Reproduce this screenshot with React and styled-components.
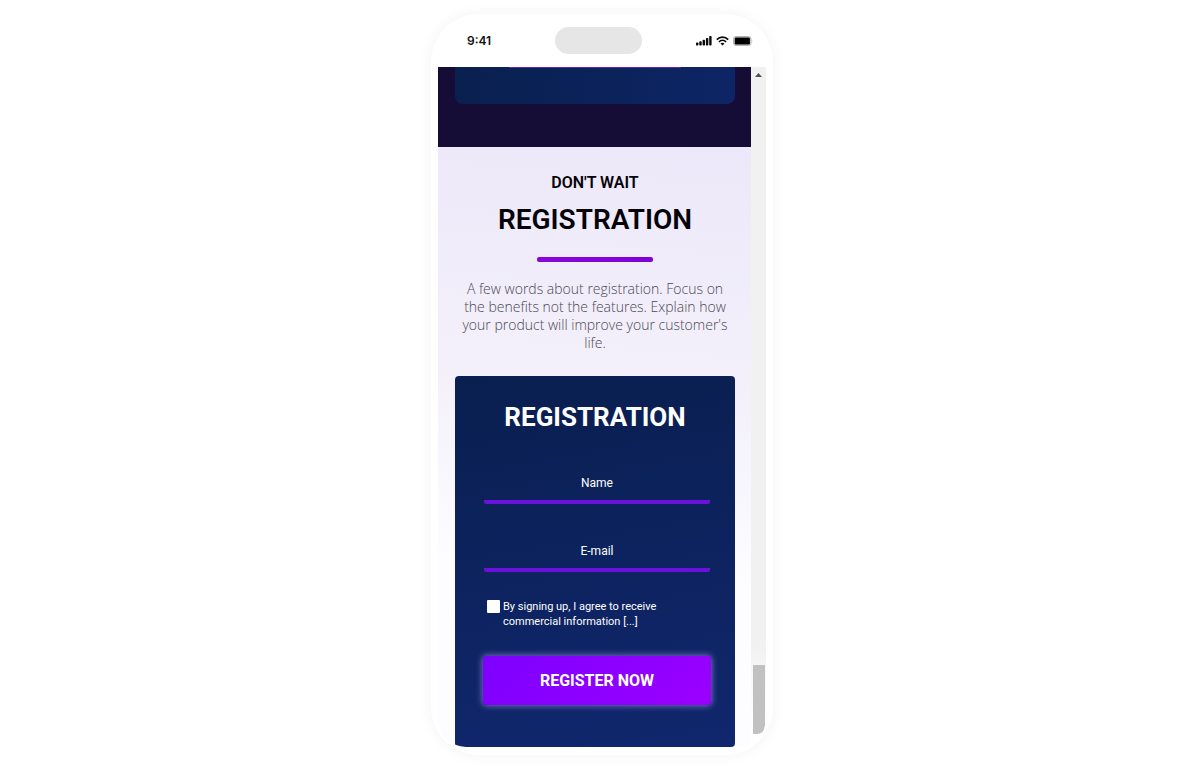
import React, { useState } from 'react';
import styled, { createGlobalStyle } from 'styled-components';

const GlobalStyle = createGlobalStyle`
  * {
    box-sizing: border-box;
  }
  body {
    margin: 0;
    background: #fff;
    font-family: Roboto, 'Liberation Sans', sans-serif;
    color: #050308;
  }
`;

const Page = styled.main`
  display: flex;
  justify-content: center;
  padding: 14px 0 12px 4px;
`;

const Phone = styled.div`
  width: 100%;
  max-width: 342px;
  padding: 0 7px 8px;
  border-radius: 48px;
  background: #fff;
  box-shadow: 0 0 14px 2px rgba(0, 0, 0, 0.04);
`;

const StatusBar = styled.header`
  display: grid;
  grid-template-columns: 88px auto 1fr;
  align-items: center;
  height: 53px;
  padding: 0 13px 0 29px;
`;

const Time = styled.span`
  font: 600 12px/16px Inter, sans-serif;
  color: #111;
`;

const Island = styled.div`
  width: 87px;
  height: 27px;
  border-radius: 14px;
  background: #e6e6e6;
`;

const StatusIcons = styled.div`
  display: flex;
  justify-content: flex-end;
  align-items: center;
  gap: 4px;
`;

const Screen = styled.div`
  display: flex;
  overflow: hidden;
  border-radius: 0 0 28px 28px;
`;

const Content = styled.div`
  flex: 1;
  min-width: 0;
`;

const PreviousSection = styled.section`
  height: 80px;
  padding: 0 16px 0 17px;
  background: #160d37;
`;

const PreviousCard = styled.div`
  display: flex;
  justify-content: center;
  height: 37px;
  border-radius: 0 0 8px 8px;
  background: linear-gradient(100deg, #09204f, #0d2565);
`;

const PreviousButtonEdge = styled.div`
  width: 172px;
  height: 1px;
  background: #6f1fae;
`;

const RegistrationSection = styled.section`
  padding: 26px 16px 0 17px;
  background: linear-gradient(185deg, #ece8f9 0%, #f4f1fb 42%, #fdfdff 70%);
  text-align: center;
`;

const Eyebrow = styled.p`
  margin: 0;
  font-size: 16px;
  line-height: 20px;
  font-weight: 600;
`;

const Title = styled.h2`
  margin: 0;
  font-size: ${props => (props.$light ? '26px' : '28px')};
  line-height: 32px;
  font-weight: ${props => (props.$light ? 700 : 600)};
  color: ${props => (props.$light ? '#fff' : 'inherit')};
`;

const Heading = styled.div`
  display: flex;
  flex-direction: column;
  align-items: center;
  gap: 11px;
`;

const Divider = styled.div`
  width: 116px;
  height: 5px;
  margin-top: 10px;
  border-radius: 2px;
  background: linear-gradient(90deg, #8a05dc, #7d00d8);
`;

const Description = styled.p`
  margin: 18px 0 24px;
  padding: 0 6px;
  font: 300 14px/18px 'Open Sans', sans-serif;
  color: #4b4853;
`;

const Card = styled.form`
  padding: 25px 24px 42px;
  border-radius: 4px;
  background: linear-gradient(170deg, #091f4f, #0d235f 50%, #10276e);
  color: #fff;
`;

const CardBody = styled.div`
  margin-top: 27px;
  padding-left: 4px;
`;

const Fields = styled.div`
  display: grid;
  gap: 24px;
  padding: 0 1px;
`;

const Field = styled.input`
  display: block;
  width: 100%;
  height: 44px;
  margin: 0;
  padding: 5px 0 0;
  border: 0;
  border-bottom: 4px solid #6c10dc;
  border-radius: 2px;
  background: transparent;
  color: #fff;
  font: 400 12px/16px Roboto, sans-serif;
  text-align: center;
  outline: none;

  &::placeholder {
    color: #fff;
    opacity: 1;
  }
`;

const Consent = styled.label`
  display: flex;
  align-items: flex-start;
  gap: 3px;
  margin: 27px 0;
  padding: 0 24px 0 4px;
  font-size: 11px;
  line-height: 15px;
  text-align: left;
`;

const Checkbox = styled.input`
  flex: none;
  appearance: none;
  width: 13px;
  height: 13px;
  margin: 1px 0 0;
  border-radius: 1px;
  background: #fff;

  &:checked {
    background: #8a00ff;
    border: 2px solid #fff;
  }
`;

const SubmitButton = styled.button`
  display: block;
  width: 100%;
  height: 49px;
  padding: 0;
  border: 0;
  border-radius: 4px;
  background: linear-gradient(135deg, #7d00ff, #9b00ff);
  box-shadow: 0 0 6px 1px rgba(150, 130, 220, 0.75);
  color: #fff;
  font: 700 16px/20px Roboto, sans-serif;
  cursor: pointer;
`;

const Scrollbar = styled.div`
  display: flex;
  flex-direction: column;
  align-items: center;
  justify-content: space-between;
  width: 15px;
  padding: 6px 0 13px;
  background: linear-gradient(#f1f1f1 85%, #f5f5f5 88%, #fff 98%);
`;

const Thumb = styled.div`
  width: 12px;
  height: 69px;
  background: #c1c1c1;
  border-radius: 0 0 8px 0;
`;

const SignalIcon = () => (
  <svg width="16" height="10" viewBox="0 0 16 10" fill="#080808">
    <rect x="0" y="6.5" width="2.4" height="3" rx="0.8" />
    <rect x="3.3" y="5.2" width="2.4" height="4.3" rx="0.8" />
    <rect x="6.6" y="3.8" width="2.4" height="5.7" rx="0.8" />
    <rect x="9.9" y="2" width="2.4" height="7.5" rx="0.8" />
    <rect x="13.2" y="0" width="2.4" height="9.5" rx="0.8" />
  </svg>
);

const WifiIcon = () => (
  <svg width="13" height="10" viewBox="0 0 13 10" fill="none" stroke="#080808">
    <path d="M0.8 3.6 C4 0.2 9 0.2 12.2 3.6" strokeWidth="1.7" />
    <path d="M2.9 6 C5 3.9 8 3.9 10.1 6" strokeWidth="1.7" />
    <path d="M4.5 7.4 Q6.5 5.9 8.5 7.4 L6.5 9.5Z" fill="#080808" stroke="none" />
  </svg>
);

const BatteryIcon = () => (
  <svg width="20" height="10" viewBox="0 0 20 10">
    <rect x="0.5" y="0.5" width="17.5" height="9" rx="2.5" fill="#ddd" stroke="#b5b5b5" />
    <rect x="1.7" y="1.6" width="15.2" height="6.8" rx="1.2" fill="#000" />
    <path d="M18.8 3.5 Q20 5 18.8 6.5Z" fill="#b5b5b5" />
  </svg>
);

const ArrowUp = () => (
  <svg width="7" height="4" viewBox="0 0 7 4">
    <path d="M3.5 0 L7 4 H0Z" fill="#505050" />
  </svg>
);

const RegistrationForm = () => {
  const [values, setValues] = useState({ name: '', email: '' });
  const [agreed, setAgreed] = useState(false);
  const handleChange = e =>
    setValues({ ...values, [e.target.name]: e.target.value });

  return (
    <Card onSubmit={e => e.preventDefault()}>
      <Title as="h3" $light>
        REGISTRATION
      </Title>
      <CardBody>
        <Fields>
          <Field
            name="name"
            placeholder="Name"
            aria-label="Name"
            value={values.name}
            onChange={handleChange}
          />
          <Field
            name="email"
            type="email"
            placeholder="E-mail"
            aria-label="E-mail"
            value={values.email}
            onChange={handleChange}
          />
        </Fields>
        <Consent>
          <Checkbox
            type="checkbox"
            checked={agreed}
            onChange={e => setAgreed(e.target.checked)}
          />
          <span>
            By signing up, I agree to receive commercial information [...]
          </span>
        </Consent>
        <SubmitButton type="submit">REGISTER NOW</SubmitButton>
      </CardBody>
    </Card>
  );
};

const App = () => (
  <>
    <GlobalStyle />
    <Page>
      <Phone>
        <StatusBar>
          <Time>9:41</Time>
          <Island />
          <StatusIcons>
            <SignalIcon />
            <WifiIcon />
            <BatteryIcon />
          </StatusIcons>
        </StatusBar>
        <Screen>
          <Content>
            <PreviousSection>
              <PreviousCard>
                <PreviousButtonEdge />
              </PreviousCard>
            </PreviousSection>
            <RegistrationSection>
              <Heading>
                <Eyebrow>DON'T WAIT</Eyebrow>
                <Title>REGISTRATION</Title>
                <Divider />
              </Heading>
              <Description>
                A few words about registration. Focus on the benefits not the
                features. Explain how your product will improve your customer's
                life.
              </Description>
              <RegistrationForm />
            </RegistrationSection>
          </Content>
          <Scrollbar aria-hidden="true">
            <ArrowUp />
            <Thumb />
          </Scrollbar>
        </Screen>
      </Phone>
    </Page>
  </>
);

export default App;
